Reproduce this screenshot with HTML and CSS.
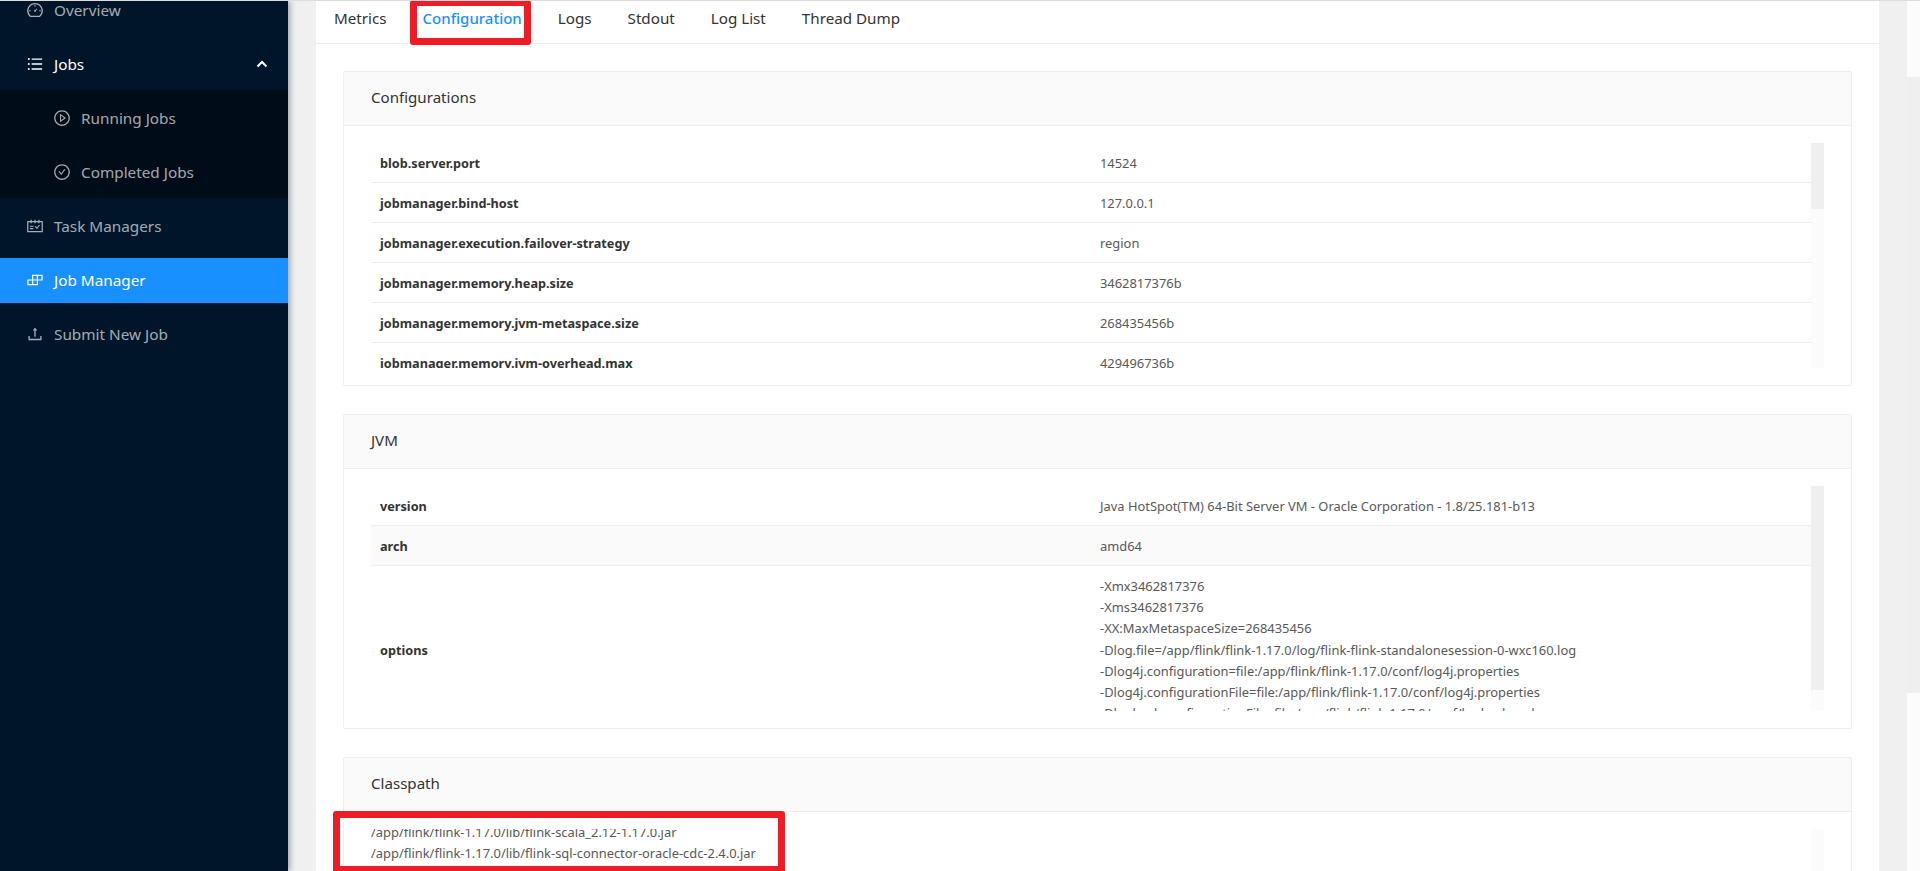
FILE: index.html
```html
<!DOCTYPE html>
<html lang="en">

<head>
  <meta charset="UTF-8">
  <title>Apache Flink Web Dashboard</title>
  <link rel="stylesheet" href="styles.css">
</head>

<body>

  <aside class="sidebar">
    <div class="menu-item">
      <svg class="icon" viewBox="0 0 1024 1024"><path d="M924.8 385.6a446.7 446.7 0 0 0-96-142.4 446.7 446.7 0 0 0-142.4-96C631.1 123.8 572.5 112 512 112s-119.1 11.8-174.4 35.2a446.7 446.7 0 0 0-142.4 96 446.7 446.7 0 0 0-96 142.4C75.8 440.9 64 499.5 64 560c0 132.7 58.3 257.7 159.9 343.1l1.7 1.4c5.8 4.8 13.1 7.5 20.6 7.5h531.7c7.5 0 14.8-2.7 20.6-7.5l1.7-1.4C901.7 817.7 960 692.7 960 560c0-60.5-11.9-119.1-35.2-174.4zM761.4 836H262.6A371.12 371.12 0 0 1 140 560c0-99.4 38.7-192.8 109-263 70.3-70.3 163.7-109 263-109 99.4 0 192.8 38.7 263 109 70.3 70.3 109 163.7 109 263 0 105.6-44.5 205.5-122.6 276z"/><path d="M623.5 421.5a8.03 8.03 0 0 0-11.3 0L527.7 506c-18.7-5-39.4-.2-54.1 14.5a55.95 55.95 0 0 0 0 79.2 55.95 55.95 0 0 0 79.2 0 55.87 55.87 0 0 0 14.5-54.1l84.5-84.5c3.1-3.1 3.1-8.2 0-11.3l-28.3-28.3zM490 320h44c4.4 0 8-3.6 8-8v-80c0-4.4-3.6-8-8-8h-44c-4.4 0-8 3.6-8 8v80c0 4.4 3.6 8 8 8zM750 538v44c0 4.4 3.6 8 8 8h80c4.4 0 8-3.6 8-8v-44c0-4.4-3.6-8-8-8h-80c-4.4 0-8 3.6-8 8zM178 590h80c4.4 0 8-3.6 8-8v-44c0-4.4-3.6-8-8-8h-80c-4.4 0-8 3.6-8 8v44c0 4.4 3.6 8 8 8z"/></svg>
      <span>Overview</span>
    </div>
    <div class="menu-item menu-open">
      <svg class="icon" viewBox="0 0 1024 1024"><path d="M912 192H328c-4.4 0-8 3.6-8 8v56c0 4.4 3.6 8 8 8h584c4.4 0 8-3.6 8-8v-56c0-4.4-3.6-8-8-8zm0 284H328c-4.4 0-8 3.6-8 8v56c0 4.4 3.6 8 8 8h584c4.4 0 8-3.6 8-8v-56c0-4.4-3.6-8-8-8zm0 284H328c-4.4 0-8 3.6-8 8v56c0 4.4 3.6 8 8 8h584c4.4 0 8-3.6 8-8v-56c0-4.4-3.6-8-8-8zM104 228a56 56 0 1 0 112 0 56 56 0 1 0-112 0zm0 284a56 56 0 1 0 112 0 56 56 0 1 0-112 0zm0 284a56 56 0 1 0 112 0 56 56 0 1 0-112 0z"/></svg>
      <span>Jobs</span>
      <svg class="arrow" viewBox="0 0 12 8"><path d="M1.5 6.5L6 2l4.5 4.5"/></svg>
    </div>
    <div class="submenu">
      <div class="menu-item">
        <svg class="icon" viewBox="0 0 1024 1024"><path d="M512 64C264.6 64 64 264.6 64 512s200.6 448 448 448 448-200.6 448-448S759.4 64 512 64zm0 820c-205.4 0-372-166.6-372-372s166.6-372 372-372 372 166.6 372 372-166.6 372-372 372z"/><path d="M719.4 499.1l-296.1-215A15.9 15.9 0 0 0 398 297v430c0 13.1 14.8 20.5 25.3 12.9l296.1-215a15.9 15.9 0 0 0 0-25.8zm-257.6 134V390.9L628.5 512 461.8 633.1z"/></svg>
        <span>Running Jobs</span>
      </div>
      <div class="menu-item">
        <svg class="icon" viewBox="0 0 1024 1024"><path d="M699 353h-46.9c-10.2 0-19.9 4.9-25.9 13.3L469 584.3l-71.2-98.8c-6-8.3-15.6-13.3-25.9-13.3H325c-6.5 0-10.3 7.4-6.5 12.7l124.6 172.8a31.8 31.8 0 0 0 51.7 0l210.6-292c3.9-5.3.1-12.7-6.4-12.7z"/><path d="M512 64C264.6 64 64 264.6 64 512s200.6 448 448 448 448-200.6 448-448S759.4 64 512 64zm0 820c-205.4 0-372-166.6-372-372s166.6-372 372-372 372 166.6 372 372-166.6 372-372 372z"/></svg>
        <span>Completed Jobs</span>
      </div>
    </div>
    <div class="menu-item">
      <svg class="icon" viewBox="0 0 1024 1024"><path d="M928 224H768v-56c0-4.4-3.6-8-8-8h-56c-4.4 0-8 3.6-8 8v56H548v-56c0-4.4-3.6-8-8-8h-56c-4.4 0-8 3.6-8 8v56H328v-56c0-4.4-3.6-8-8-8h-56c-4.4 0-8 3.6-8 8v56H96c-17.7 0-32 14.3-32 32v576c0 17.7 14.3 32 32 32h832c17.7 0 32-14.3 32-32V256c0-17.7-14.3-32-32-32zm-40 568H136V296h120v56c0 4.4 3.6 8 8 8h56c4.4 0 8-3.6 8-8v-56h148v56c0 4.4 3.6 8 8 8h56c4.4 0 8-3.6 8-8v-56h148v56c0 4.4 3.6 8 8 8h56c4.4 0 8-3.6 8-8v-56h120v496zM416 496H232c-4.4 0-8 3.6-8 8v48c0 4.4 3.6 8 8 8h184c4.4 0 8-3.6 8-8v-48c0-4.4-3.6-8-8-8zm0 136H232c-4.4 0-8 3.6-8 8v48c0 4.4 3.6 8 8 8h184c4.4 0 8-3.6 8-8v-48c0-4.4-3.6-8-8-8zm308.2-177.4L620.6 598.3l-52.8-73.1c-3-4.2-7.8-6.6-12.9-6.6H500c-6.5 0-10.3 7.4-6.5 12.7l114.1 158.2a15.9 15.9 0 0 0 25.8 0l165-228.7c3.8-5.3 0-12.7-6.5-12.7H737c-5 0-9.9 2.4-12.8 6.5z"/></svg>
      <span>Task Managers</span>
    </div>
    <div class="menu-item active">
      <svg class="icon" viewBox="0 0 1024 1024"><path d="M916 210H376c-17.7 0-32 14.3-32 32v236H108c-17.7 0-32 14.3-32 32v272c0 17.7 14.3 32 32 32h540c17.7 0 32-14.3 32-32V546h236c17.7 0 32-14.3 32-32V242c0-17.7-14.3-32-32-32zm-504 68h200v200H412V278zm-68 468H144V546h200v200zm268 0H412V546h200v200zm268-268H680V278h200v200z"/></svg>
      <span>Job Manager</span>
    </div>
    <div class="menu-item">
      <svg class="icon" viewBox="0 0 1024 1024"><path d="M400 317.7h73.9V656c0 4.4 3.6 8 8 8h60c4.4 0 8-3.6 8-8V317.7H624c6.7 0 10.4-7.7 6.3-12.9L518.3 163a8 8 0 0 0-12.6 0l-112 141.7c-4.1 5.3-.4 13 6.3 13zM878 626h-60c-4.4 0-8 3.6-8 8v154H214V634c0-4.4-3.6-8-8-8h-60c-4.4 0-8 3.6-8 8v198c0 17.7 14.3 32 32 32h684c17.7 0 32-14.3 32-32V634c0-4.4-3.6-8-8-8z"/></svg>
      <span>Submit New Job</span>
    </div>
  </aside>

  <main class="main">
    <div class="page">
      <nav class="tabs">
        <a>Metrics</a>
        <a class="tab-active">Configuration</a>
        <a>Logs</a>
        <a>Stdout</a>
        <a>Log List</a>
        <a>Thread Dump</a>
      </nav>

      <div class="content">
        <section class="card">
          <div class="card-head">Configurations</div>
          <div class="card-body">
            <div class="scroll">
              <table>
                <tr><td class="key">blob.server.port</td><td>14524</td></tr>
                <tr><td class="key">jobmanager.bind-host</td><td>127.0.0.1</td></tr>
                <tr><td class="key">jobmanager.execution.failover-strategy</td><td>region</td></tr>
                <tr><td class="key">jobmanager.memory.heap.size</td><td>3462817376b</td></tr>
                <tr><td class="key">jobmanager.memory.jvm-metaspace.size</td><td>268435456b</td></tr>
                <tr><td class="key">jobmanager.memory.jvm-overhead.max</td><td>429496736b</td></tr>
              </table>
            </div>
            <div class="track"><div class="thumb thumb-config"></div></div>
          </div>
        </section>

        <section class="card">
          <div class="card-head">JVM</div>
          <div class="card-body">
            <div class="scroll">
              <table>
                <tr><td class="key">version</td><td>Java HotSpot(TM) 64-Bit Server VM - Oracle Corporation - 1.8/25.181-b13</td></tr>
                <tr class="row-hover"><td class="key">arch</td><td>amd64</td></tr>
                <tr>
                  <td class="key">options</td>
                  <td class="options">
                    <div>-Xmx3462817376</div>
                    <div>-Xms3462817376</div>
                    <div>-XX:MaxMetaspaceSize=268435456</div>
                    <div>-Dlog.file=/app/flink/flink-1.17.0/log/flink-flink-standalonesession-0-wxc160.log</div>
                    <div>-Dlog4j.configuration=file:/app/flink/flink-1.17.0/conf/log4j.properties</div>
                    <div>-Dlog4j.configurationFile=file:/app/flink/flink-1.17.0/conf/log4j.properties</div>
                    <div>-Dlogback.configurationFile=file:/app/flink/flink-1.17.0/conf/logback.xml</div>
                  </td>
                </tr>
              </table>
            </div>
            <div class="track"><div class="thumb thumb-jvm"></div></div>
          </div>
        </section>

        <section class="card">
          <div class="card-head">Classpath</div>
          <div class="card-body">
            <div class="scroll">
              <div class="classpath-list">
                <div>/app/flink/flink-1.17.0/lib/flink-scala_2.12-1.17.0.jar</div>
                <div>/app/flink/flink-1.17.0/lib/flink-sql-connector-oracle-cdc-2.4.0.jar</div>
              </div>
            </div>
            <div class="track"></div>
          </div>
        </section>
      </div>
    </div>
  </main>

  <div class="page-scrollbar"><div class="page-thumb"></div></div>

  <!-- red marks drawn over the screenshot -->
  <div class="mark mark-tab"></div>
  <div class="mark mark-classpath"></div>

</body>

</html>
```

FILE: styles.css
```css
* {
  margin: 0;
  padding: 0;
  box-sizing: border-box;
}

html,
body {
  height: 100%;
  overflow: hidden;
}

body {
  position: relative;
  display: flex;
  border-top: 1px solid #dcdcdc;
  background-color: #f0f0f0;
  font-family: "Noto Sans", sans-serif;
  font-size: 12.9px;
  line-height: 21px;
  color: #595959;
}

.sidebar {
  position: relative;
  z-index: 1;
  display: flex;
  flex-direction: column;
  flex: 0 0 288px;
  background-color: #001529;
  box-shadow: 2px 0 6px rgba(0, 21, 41, 0.35);
  font-size: 15.3px;
  color: rgba(255, 255, 255, 0.65);
}

.sidebar > .menu-item:first-child {
  margin-top: -13.5px;
}

.menu-item {
  display: flex;
  flex: none;
  align-items: center;
  height: 45px;
  margin: 4.5px 0;
  padding-left: 26px;
}

.menu-item .icon {
  width: 18px;
  height: 18px;
  margin-right: 10px;
  fill: currentColor;
}

.menu-open {
  margin-bottom: 3.5px;
  color: #fff;
}

.arrow {
  width: 12px;
  height: 8px;
  margin-left: auto;
  margin-right: 20px;
  fill: none;
  stroke: #fff;
  stroke-width: 2;
}

.submenu {
  display: flex;
  flex-direction: column;
  flex: none;
  height: 108px;
  margin-bottom: 1px;
  padding-top: 1px;
  background-color: #000c17;
}

.submenu .menu-item {
  padding-left: 53px;
}

.active {
  background-color: #1890ff;
  color: #fff;
}

.main {
  flex: 1;
  min-width: 0;
  height: 100%;
  padding: 0 28px;
}

.page {
  height: 100%;
  overflow: hidden;
  background-color: #fff;
}

.tabs {
  display: flex;
  gap: 36px;
  height: 43px;
  padding-left: 18px;
  border-bottom: 1px solid #eee;
  font-size: 15.2px;
  line-height: 34px;
  color: #333;
}

.tab-active {
  font-size: 15px;
  font-weight: 500;
  color: #1890ff;
}

.content {
  display: flex;
  flex-direction: column;
  gap: 28px;
  padding: 27px 27px 0 27px;
}

.card {
  flex: none;
  border: 1px solid #eee;
  border-radius: 2px;
}

.card-head {
  height: 54px;
  padding-left: 27px;
  border-bottom: 1px solid #eee;
  background-color: #fafafa;
  font-size: 15.1px;
  line-height: 50px;
  color: #333;
}

.card-body {
  display: flex;
  height: 259px;
  padding: 17px 27px;
}

.scroll {
  flex: 1;
  min-width: 0;
  overflow: hidden;
}

.track {
  flex: 0 0 13px;
  background-color: #fbfbfb;
}

.thumb {
  background-color: #efefef;
}

.thumb-config {
  height: 66px;
}

.thumb-jvm {
  height: 204px;
}

table {
  width: 100%;
  border-collapse: collapse;
  table-layout: fixed;
}

td {
  padding: 10px 9px 8px;
  border-bottom: 1px solid #eee;
  vertical-align: middle;
}

.key {
  font-size: 12.7px;
  font-weight: 700;
  color: #333;
}

.row-hover {
  background-color: #fafafa;
}

.options {
  line-height: 21.2px;
}

.classpath-list {
  margin-top: -7px;
}

.page-scrollbar {
  flex: 0 0 13px;
  background-color: #fcfcfc;
}

.page-thumb {
  height: 616px;
  margin-top: 76px;
  background-color: #efefef;
}

.mark {
  position: absolute;
  z-index: 2;
  border: 7px solid #ee1c25;
  border-radius: 3px;
}

.mark-tab {
  left: 410px;
  top: -1px;
  width: 121px;
  height: 45px;
  border-top-width: 6px;
}

.mark-classpath {
  left: 333px;
  top: 810px;
  width: 452px;
  height: 60px;
  border-bottom-width: 5px;
  border-bottom-left-radius: 0;
  border-bottom-right-radius: 0;
}
```
